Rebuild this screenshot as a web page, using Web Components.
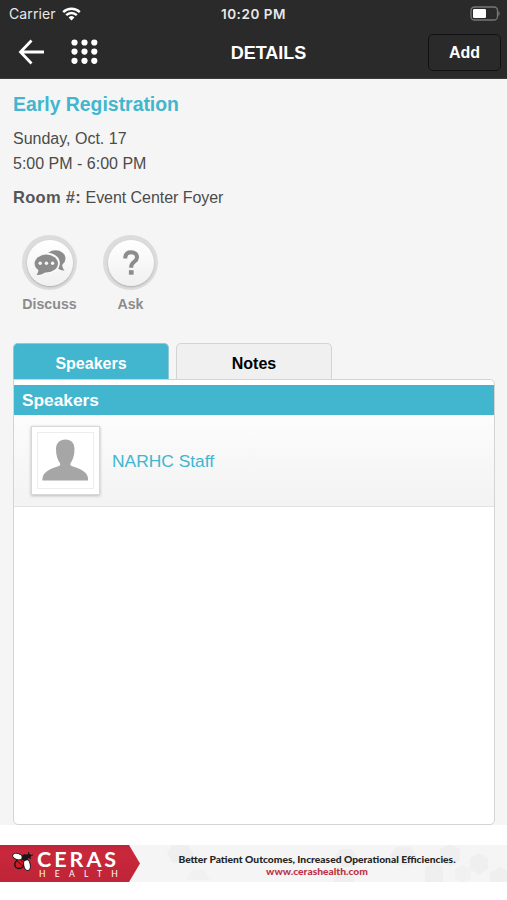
<!DOCTYPE html>
<html lang="en">
<head>
<meta charset="utf-8">
<meta name="viewport" content="width=device-width, initial-scale=1">
<title>Details</title>
<style>
  body {
    margin: 0;
    background: #fff;
    font-family: "Liberation Sans", Arial, sans-serif;
    color: #4b4b4b;
  }
</style>
</head>
<body>
<session-page>
  <status-bar slot="top" carrier="Carrier" time="10:20 PM"></status-bar>
  <nav-bar slot="top" action="Add">DETAILS</nav-bar>
  <session-info>
    <span slot="title">Early Registration</span>
    <span slot="date">Sunday, Oct. 17</span>
    <span slot="time">5:00 PM - 6:00 PM</span>
    <span slot="label">Room #:</span>
    <span slot="room">Event Center Foyer</span>
  </session-info>
  <action-row>
    <round-action icon="discuss">Discuss</round-action>
    <round-action icon="ask">Ask</round-action>
  </action-row>
  <tab-panel>
    <tab-button slot="tabs" active>Speakers</tab-button>
    <tab-button slot="tabs">Notes</tab-button>
    <section-heading>Speakers</section-heading>
    <speaker-row>NARHC Staff</speaker-row>
  </tab-panel>
  <ad-banner slot="bottom" brand="CERAS" sub="HEALTH">
    <span slot="tagline">Better Patient Outcomes, Increased Operational Efficiencies.</span>
    <span slot="link">www.cerashealth.com</span>
  </ad-banner>
</session-page>

<script>
function define(name, html, setup) {
  const template = document.createElement('template');
  template.innerHTML = html;

  customElements.define(name, class extends HTMLElement {
    constructor() {
      super();
      this.attachShadow({ mode: 'open' });
      this.shadowRoot.appendChild(template.content.cloneNode(true));
    }

    connectedCallback() {
      if (setup) setup(this, this.shadowRoot);
    }
  });
}

define('session-page', `
<style>
  :host {
    display: flex;
    flex-direction: column;
    height: 900px;
    overflow: hidden;
    background: #fff;
  }
  main {
    display: flex;
    flex-direction: column;
    box-sizing: border-box;
    height: 746px;
    padding: 0 12px 0 13px;
    background: #f5f5f5;
  }
  footer {
    padding-top: 20px;
  }
</style>
<slot name="top"></slot>
<main><slot></slot></main>
<footer><slot name="bottom"></slot></footer>
`);

define('status-bar', `
<style>
  :host {
    display: grid;
    grid-template-columns: 1fr auto 1fr;
    align-items: center;
    height: 26px;
    padding: 0 7px 0 9px;
    background: #2a2a2a;
    color: #e8e8e8;
    font: 14px/26px Inter, sans-serif;
  }
  .left {
    display: flex;
    align-items: center;
    gap: 6px;
  }
  .time {
    margin-right: 2px;
    font-weight: 600;
    font-size: 13.5px;
    letter-spacing: 0.55px;
  }
  .battery {
    justify-self: end;
  }
  svg {
    display: block;
  }
  .carrier {
    letter-spacing: 0.1px;
  }
  .carrier, .time {
    padding-top: 1px;
  }
</style>
<div class="left">
  <span class="carrier"></span>
  <svg width="19" height="14" viewBox="0 0 19 14" fill="none" stroke="#fff" stroke-width="2.4">
    <path d="M1.2 5.1a11.8 11.8 0 0 1 16.6 0"/>
    <path d="M4.2 8.2a7.5 7.5 0 0 1 10.6 0"/>
    <path d="M6.6 10.5a4.1 4.1 0 0 1 5.8 0L9.5 13.5z" fill="#fff" stroke="none"/>
  </svg>
</div>
<span class="time"></span>
<svg class="battery" width="31" height="15" viewBox="0 0 31 15">
  <rect x="2" y="1" width="26.5" height="13" rx="3.5" fill="none" stroke="#777" stroke-width="1.3"/>
  <rect x="4" y="3" width="13" height="9" rx="1.3" fill="#fff"/>
  <path d="M29.3 5v5c1.8-.8 1.8-4.2 0-5z" fill="#777"/>
</svg>
`, (el, root) => {
  root.querySelector('.carrier').textContent = el.getAttribute('carrier');
  root.querySelector('.time').textContent = el.getAttribute('time');
});

define('nav-bar', `
<style>
  :host {
    display: grid;
    grid-template-columns: 1fr auto 1fr;
    align-items: center;
    box-sizing: border-box;
    height: 53px;
    padding: 0 6px 0 18px;
    background: #2a2a2a;
    border-bottom: 1px solid #3c3c3c;
    color: #fff;
  }
  .left {
    display: flex;
    align-items: center;
    gap: 26px;
  }
  svg {
    display: block;
  }
  .title {
    font-weight: bold;
    font-size: 18px;
    padding: 2px 0 0 18px;
  }
  button {
    justify-self: end;
    width: 73px;
    height: 37px;
    padding: 2px 0 0;
    border: 1.5px solid #111;
    border-radius: 5px;
    background: none;
    color: #fff;
    font: bold 16px "Liberation Sans", Arial, sans-serif;
  }
</style>
<div class="left">
  <svg width="27" height="26" viewBox="0 0 27 26" fill="none" stroke="#fff" stroke-width="2.8" stroke-linejoin="miter">
    <path d="M13.5 1.5L2.5 13l11 11.5M2.5 13H26"/>
  </svg>
  <svg width="27" height="26" viewBox="0 0 27 26" fill="#fff">
    <circle cx="3.5" cy="3.5" r="3.1"/><circle cx="13.5" cy="3.5" r="3.1"/><circle cx="23.3" cy="3.5" r="3.1"/>
    <circle cx="3.5" cy="12.6" r="3.1"/><circle cx="13.5" cy="12.6" r="3.1"/><circle cx="23.3" cy="12.6" r="3.1"/>
    <circle cx="3.5" cy="21.8" r="3.1"/><circle cx="13.5" cy="21.8" r="3.1"/><circle cx="23.3" cy="21.8" r="3.1"/>
  </svg>
</div>
<div class="title"><slot></slot></div>
<button></button>
`, (el, root) => {
  root.querySelector('button').textContent = el.getAttribute('action');
});

define('session-info', `
<style>
  :host {
    display: block;
    height: 156px;
    font-size: 16px;
    line-height: 25px;
  }
  h1 {
    margin: 0 0 9px;
    padding-top: 13px;
    font-size: 19.4px;
    line-height: 25px;
    color: #41b6ce;
  }
  .room {
    margin-top: 9px;
    letter-spacing: -0.05px;
  }
  b {
    font-size: 16.5px;
    letter-spacing: 0.3px;
    color: #555;
  }
</style>
<h1><slot name="title"></slot></h1>
<div><slot name="date"></slot></div>
<div><slot name="time"></slot></div>
<div class="room"><b><slot name="label"></slot></b> <slot name="room"></slot></div>
`);

define('action-row', `
<style>
  :host {
    display: flex;
    gap: 24px;
    height: 108px;
    padding-left: 8px;
  }
</style>
<slot></slot>
`);

const ICONS = {
  discuss: `
    <ellipse cx="21.5" cy="9.5" rx="10" ry="8.3" fill="#8c8c8c"/>
    <path d="M28.500 14c-.8 2.500 0 5 2 7.500-3.500.2-6-1.300-7.500-3.500z" fill="#8c8c8c"/>
    <ellipse cx="13" cy="14.2" rx="12.800" ry="10.400" fill="#f9f9f9"/>
    <ellipse cx="12.3" cy="14.5" rx="11.700" ry="9" fill="#8c8c8c"/>
    <path d="M4 19c.8 2.500.3 4.500-1.500 7 4 .2 7.500-1.500 10-3.500z" fill="#8c8c8c"/>
    <g fill="#f7f7f7"><circle cx="6.2" cy="14.3" r="1.7"/><circle cx="12.4" cy="14.3" r="1.7"/><circle cx="18.6" cy="14.3" r="1.7"/></g>`,
  ask: `
    <path d="M10.200 9.500c0-4 2.200-6.300 5.900-6.300 3.600 0 5.900 2 5.900 5.200 0 4.300-5.800 4.600-5.800 9.300v1" fill="none" stroke="#8c8c8c" stroke-width="4"/>
    <rect x="13.900" y="21.200" width="4.700" height="4.500" fill="#8c8c8c"/>`,
};

define('round-action', `
<style>
  :host {
    display: flex;
    flex-direction: column;
    align-items: center;
    width: 57px;
    font-weight: bold;
    font-size: 14.2px;
    color: #8c8c8c;
  }
  .ring {
    display: grid;
    place-items: center;
    width: 55px;
    height: 55px;
    border-radius: 50%;
    background: #dcdcdc;
  }
  .disc {
    display: grid;
    place-items: center;
    width: 46px;
    height: 46px;
    border-radius: 50%;
    background: linear-gradient(#fff, #f0f0f0);
    box-shadow: 0 1px 2px #aaa;
  }
  .label {
    margin-top: 5px;
    line-height: 18px;
    white-space: nowrap;
  }
</style>
<div class="ring"><div class="disc">
  <svg width="32" height="28" viewBox="0 0 32 28"></svg>
</div></div>
<div class="label"><slot></slot></div>
`, (el, root) => {
  root.querySelector('svg').innerHTML = ICONS[el.getAttribute('icon')];
});

define('tab-panel', `
<style>
  :host {
    display: flex;
    flex-direction: column;
    height: 482px;
  }
  .tabs {
    display: flex;
    gap: 7px;
  }
  .panel {
    box-sizing: border-box;
    flex: 1;
    padding-top: 5px;
    border: 1.5px solid #d4d4d4;
    border-radius: 0 5px 5px 5px;
    background: #fff;
    overflow: hidden;
  }
</style>
<div class="tabs"><slot name="tabs"></slot></div>
<div class="panel"><slot></slot></div>
`);

define('tab-button', `
<style>
  :host {
    box-sizing: border-box;
    width: 156px;
    height: 36px;
    border: 1.5px solid #d4d4d4;
    border-bottom: 0;
    border-radius: 5px 5px 0 0;
    background: #f0f0f0;
    color: #000;
    font-weight: bold;
    font-size: 16px;
    line-height: 39px;
    text-align: center;
  }
  :host([active]) {
    background: #41b6ce;
    border-color: #8fc9d5;
    color: #fff;
  }
</style>
<slot></slot>
`);

define('section-heading', `
<style>
  :host {
    display: block;
    height: 30px;
    padding-left: 8px;
    background: #41b6ce;
    color: #fff;
    font-weight: bold;
    font-size: 17.3px;
    line-height: 31px;
  }
</style>
<slot></slot>
`);

define('speaker-row', `
<style>
  :host {
    display: flex;
    align-items: center;
    gap: 12px;
    box-sizing: border-box;
    height: 92px;
    padding-left: 17px;
    border-bottom: 1.5px solid #e3e3e3;
    background: linear-gradient(#fcfcfc, #f3f3f3);
    color: #41b6ce;
    font-size: 17.4px;
  }
  .photo {
    display: grid;
    place-items: center;
    box-sizing: border-box;
    width: 69px;
    height: 69px;
    border: 1px solid #d8d8d8;
    background: #fff;
    box-shadow: 0 1px 3px #bbb;
  }
  svg {
    display: block;
    border: 1px solid #ededed;
  }
  .name {
    padding-top: 2px;
  }
</style>
<div class="photo">
  <svg width="55" height="55" viewBox="0 0 55 55" fill="#a6a6a6">
    <path d="M27.500 6.500c5.800 0 9 3.800 9 9.500 0 6.500-1.600 11-4 14.200-.8 2 .5 2.600 2.500 3.300 4 1.400 7.500 2.600 10.500 4.800 3.200 2.300 4.700 4.700 4.700 9.200H4.300c0-4.500 1.500-6.900 4.700-9.200 3-2.200 6.500-3.400 10.500-4.800 2-.7 3.300-1.300 2.500-3.300-2.400-3.200-4-7.700-4-14.200 0-5.700 3.700-9.500 9.500-9.500z"/>
  </svg>
</div>
<div class="name"><slot></slot></div>
`);

define('ad-banner', `
<style>
  :host {
    display: flex;
    height: 37px;
    background: #f5f5f5;
    font-family: Lato, sans-serif;
  }
  .brand {
    display: flex;
    gap: 4px;
    box-sizing: border-box;
    width: 140px;
    padding: 7px 0 0 12px;
    background: linear-gradient(#bd2439, #c9283b 20%, #bf2437);
    clip-path: polygon(0 0, 129px 0, 100% 50%, 129px 100%, 0 100%);
    color: #fff;
  }
  .brand svg {
    flex: none;
  }
  .words {
    display: grid;
    grid-template-rows: 17px 10px;
    margin-top: -1px;
  }
  .name {
    font: 700 21.5px/17px Lato, sans-serif;
    letter-spacing: 3px;
    white-space: nowrap;
  }
  .sub {
    padding-left: 2px;
    font-size: 8.5px;
    line-height: 13px;
    letter-spacing: 9.3px;
    white-space: nowrap;
  }
  .copy {
    display: grid;
    flex: 1;
  }
  .copy > * {
    grid-area: 1 / 1;
  }
  .text {
    padding: 8px 13px 0 0;
    text-align: center;
    font-weight: 900;
    font-size: 10.25px;
    line-height: 12px;
    white-space: nowrap;
    color: #252525;
  }
  .link {
    color: #bd3348;
  }
</style>
<div class="brand">
  <svg width="21" height="20" viewBox="0 0 21 20">
    <ellipse cx="8" cy="11.5" rx="5.6" ry="4.5" transform="rotate(-40 8 11.5)" fill="#d81722" stroke="#171717" stroke-width="1.4"/>
    <path d="M5 9l6 5M7.5 7l5 4.5" stroke="#171717" stroke-width=".9"/>
    <ellipse cx="5.5" cy="4.5" rx="5" ry="3" transform="rotate(18 5.5 4.5)" fill="#fff" stroke="#171717"/>
    <ellipse cx="15" cy="13" rx="3.3" ry="5.5" transform="rotate(-10 15 13)" fill="#fff" stroke="#171717"/>
    <circle cx="13" cy="5.5" r="3.3" fill="#171717"/>
    <circle cx="17" cy="4" r="2.2" fill="#171717"/>
    <path d="M16 3l1-3M17 4l4-1M16 5l3 2" stroke="#171717"/>
  </svg>
  <div class="words"><div class="name"></div><div class="sub"></div></div>
</div>
<div class="copy">
  <svg width="367" height="37" viewBox="0 0 367 37" fill="#efefef">
    <path d="M32 0h16l6 9-6 9H33l-6-9zM200 4h12l6 9-6 9h-12l-6-9zM197 25h12l6 10-2 2h-20zM257 2h13l7 9-7 9h-13l-7-9zM300 4l10-5 10 5v12l-10 6-10-6zM285 22l9-5 9 5v15h-18zM330 13l9-5 9 5v11l-9 6-9-6zM350 28l10-6 7 4v11h-17z"/>
    <path d="M52 25h12l6 10h-24zM315 24l8-4 8 4v10l-8 3-8-3z" fill="#f1f1f1"/>
  </svg>
  <div class="text">
    <div><slot name="tagline"></slot></div>
    <div class="link"><slot name="link"></slot></div>
  </div>
</div>
`, (el, root) => {
  root.querySelector('.name').textContent = el.getAttribute('brand');
  root.querySelector('.sub').textContent = el.getAttribute('sub');
});
</script>
</body>
</html>
